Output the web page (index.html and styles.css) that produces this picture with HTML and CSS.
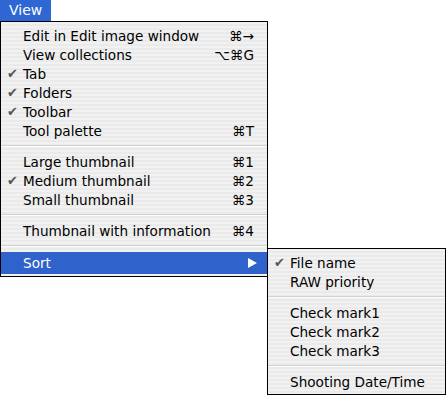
FILE: index.html
```html
<!DOCTYPE html>
<html lang="en">
  <head>
    <meta charset="utf-8" />
    <title>View menu</title>
    <link rel="stylesheet" href="styles.css">
  </head>
  <body>
    <div class="menubar">
      <span class="title">View</span>
    </div>
    <ul class="menu main">
      <li><span class="label">Edit in Edit image window</span><span class="key">⌘→</span></li>
      <li><span class="label">View collections</span><span class="key">⌥⌘G</span></li>
      <li class="checked"><span class="label">Tab</span></li>
      <li class="checked"><span class="label">Folders</span></li>
      <li class="checked"><span class="label">Toolbar</span></li>
      <li><span class="label">Tool palette</span><span class="key">⌘T</span></li>
      <li class="sep"></li>
      <li><span class="label">Large thumbnail</span><span class="key">⌘1</span></li>
      <li class="checked"><span class="label">Medium thumbnail</span><span class="key">⌘2</span></li>
      <li><span class="label">Small thumbnail</span><span class="key">⌘3</span></li>
      <li class="sep"></li>
      <li><span class="label">Thumbnail with information</span><span class="key">⌘4</span></li>
      <li class="sep"></li>
      <li class="active">
        <span class="label">Sort</span>
        <svg class="arrow" width="9" height="10" viewBox="0 0 9 10"><path d="M0 0 L9 5 L0 10 Z" fill="#fff"/></svg>
      </li>
    </ul>
    <ul class="menu sub">
      <li class="checked"><span class="label">File name</span></li>
      <li><span class="label">RAW priority</span></li>
      <li class="sep"></li>
      <li><span class="label">Check mark1</span></li>
      <li><span class="label">Check mark2</span></li>
      <li><span class="label">Check mark3</span></li>
      <li class="sep"></li>
      <li><span class="label">Shooting Date/Time</span></li>
    </ul>
  </body>
</html>
```

FILE: styles.css
```css
html,
body {
  margin: 0;
  background: #fff;
  font-family: "DejaVu Sans", sans-serif;
  font-size: 13.6px;
  color: #000;
}
body {
  position: relative;
  width: 446px;
  height: 396px;
  overflow: hidden;
}
.menubar {
  height: 21px;
}
.title {
  display: inline-block;
  width: 51px;
  height: 21px;
  line-height: 21px;
  box-sizing: border-box;
  padding-left: 9px;
  background: #2e66d4;
  color: #fff;
  font-size: 14px;
}
.menu {
  list-style: none;
  margin: 0;
  border: 1px solid #000;
  background: repeating-linear-gradient(#f1f1f1 0 2px, #eaeaea 2px 4px);
}
.main {
  width: 266px;
  padding: 4px 0 2px;
}
.sub {
  position: absolute;
  left: 267px;
  top: 248px;
  width: 177px;
  padding: 4px 0 3px;
}
.menu li {
  position: relative;
  display: flex;
  align-items: center;
  height: 19px;
  padding: 0 13px 0 22px;
}
.menu .label {
  flex: 1;
  white-space: nowrap;
}
.menu .key {
  white-space: nowrap;
}
.menu .checked::before {
  content: "✔";
  position: absolute;
  left: 6px;
  color: #555;
  font-size: 13px;
}
.menu .sep {
  height: 12px;
  padding: 0;
  background: linear-gradient(transparent 5px, #d2d2d2 5px 6px, #fbfbfb 6px 7px, transparent 7px);
}
.menu .active {
  height: 22px;
  padding-right: 10px;
  background: #2f63cb;
  color: #fff;
}
```
